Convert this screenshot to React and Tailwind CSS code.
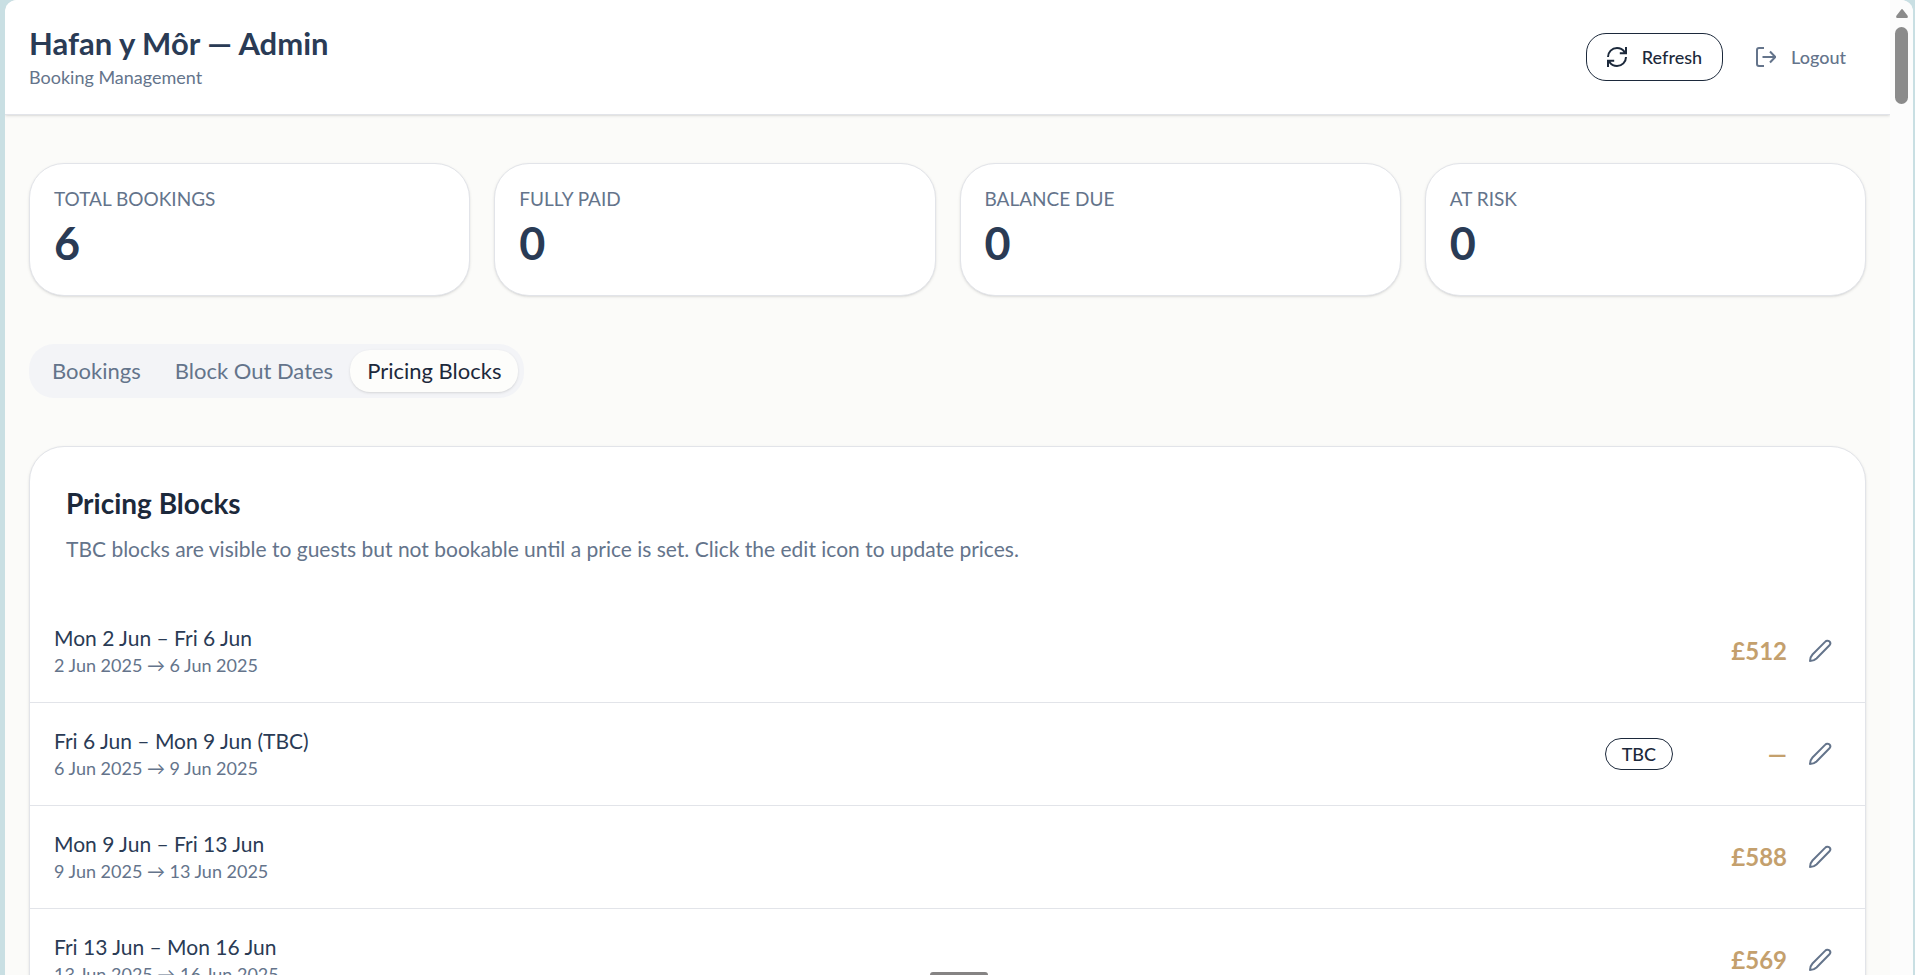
import { useState } from "react";
import clsx from "clsx";

const stats = [
  { label: "TOTAL BOOKINGS", value: 6 },
  { label: "FULLY PAID", value: 0 },
  { label: "BALANCE DUE", value: 0 },
  { label: "AT RISK", value: 0 },
];

const tabs = ["Bookings", "Block Out Dates", "Pricing Blocks"];

const blocks = [
  { id: 1, label: "Mon 2 Jun – Fri 6 Jun", dates: "2 Jun 2025 → 6 Jun 2025", price: "£512" },
  { id: 2, label: "Fri 6 Jun – Mon 9 Jun (TBC)", dates: "6 Jun 2025 → 9 Jun 2025", price: null },
  { id: 3, label: "Mon 9 Jun – Fri 13 Jun", dates: "9 Jun 2025 → 13 Jun 2025", price: "£588" },
  { id: 4, label: "Fri 13 Jun – Mon 16 Jun", dates: "13 Jun 2025 → 16 Jun 2025", price: "£569" },
];

function RefreshIcon() {
  return (
    <svg viewBox="0 0 20 20" className="size-5" fill="none" stroke="currentColor" strokeWidth="2" aria-hidden="true">
      <path d="M1 10a9 9 0 0 1 9-9c3.200 0 5.600 1.300 7.300 3.600L19 6.200M19 0v6.200h-6.200" />
      <path d="M19 10a9 9 0 0 1-9 9c-3.200 0-5.600-1.300-7.300-3.600L1 13.800M1 20v-6.200h6.200" />
    </svg>
  );
}

function LogoutIcon() {
  return (
    <svg viewBox="0 0 20 20" className="size-5" fill="none" stroke="currentColor" strokeWidth="2" aria-hidden="true">
      <path d="M8 1H3a2 2 0 0 0-2 2v14a2 2 0 0 0 2 2h5" />
      <path d="M6.500 10H19M14 4.500l5.300 5.500-5.300 5.500" />
    </svg>
  );
}

function PencilIcon() {
  return (
    <svg viewBox="0 0 24 24" className="size-6" fill="none" stroke="currentColor" strokeWidth="2" strokeLinejoin="round" aria-hidden="true">
      <path d="M17.300 2.600a2.700 2.700 0 0 1 4.200 3.700L8.500 19.500c-1.800 1.700-3.600 2.500-6.500 2.500 0-2.900.8-4.700 2.500-6.500Z" />
    </svg>
  );
}

function BlockRow({ block }) {
  return (
    <li className="flex h-[103px] items-center justify-between border-b border-[#e2e4e9] px-6">
      <div>
        <p className="text-[21px] leading-7 text-[#2a3b55]">{block.label}</p>
        <p className="mt-px text-[18px] leading-[25px] text-[#64748b]">{block.dates}</p>
      </div>
      <div className="flex items-center">
        {!block.price && (
          <span className="flex h-8 items-center rounded-full border border-[#1c293b] px-4 text-[18px] font-medium text-[#1c293b]">
            TBC
          </span>
        )}
        <span className="w-[114px] text-right text-[24px] font-bold text-[#c4a06d]">
          {block.price ?? "—"}
        </span>
        <button type="button" aria-label={`Edit ${block.label}`} className="ml-[21px] mr-[9px] text-[#64748b]">
          <PencilIcon />
        </button>
      </div>
    </li>
  );
}

function Scrollbar() {
  return (
    <div className="flex w-[23px] shrink-0 flex-col items-center bg-[#fcfcfc] pt-[9px]" aria-hidden="true">
      <svg viewBox="0 0 12 9" className="h-[9px] w-3 fill-[#8b8b8b]">
        <path d="M5 .8q1-1.400 2 0l4.600 6q.9 2.200-1 2.200H1.400q-1.900 0-1-2.200Z" />
      </svg>
      <div className="mt-[9px] h-[77px] w-[13px] rounded-full bg-[#8b8b8b]" />
    </div>
  );
}

function App() {
  const [activeTab, setActiveTab] = useState("Pricing Blocks");

  return (
    <div className="h-screen overflow-hidden bg-[#c9dfe3] pl-[5px] pr-[2px] font-['Lato',sans-serif]">
      <div className="relative flex h-full overflow-hidden rounded-t-xl bg-[#fbfbf9]">
        <div className="min-w-0 flex-1">
          <header className="flex h-[115px] items-center justify-between border-b border-[#e2e4e9] bg-white px-6 shadow-sm">
            <div>
              <h1 className="text-[31px] leading-10 font-bold text-[#2a3b55]">Hafan y Môr — Admin</h1>
              <p className="text-[18px] leading-7 text-[#64748b]">Booking Management</p>
            </div>
            <div className="flex items-center gap-[13px]">
              <button type="button" className="flex h-12 items-center gap-[15px] rounded-[20px] border border-[#1c293b] px-5 text-[18px] font-medium text-[#1c293b]">
                <RefreshIcon />
                Refresh
              </button>
              <button type="button" className="flex h-12 items-center gap-[15px] px-5 text-[18px] font-medium text-[#64748b]">
                <LogoutIcon />
                Logout
              </button>
            </div>
          </header>

          <main className="px-6 py-12">
            <section className="grid grid-cols-4 gap-6">
              {stats.map((stat) => (
                <div key={stat.label} className="h-[133px] rounded-[35px] border border-[#e2e4e9] bg-white px-6 pt-[23px] shadow-sm">
                  <p className="text-[19px] leading-6 text-[#64748b]">{stat.label}</p>
                  <p className="mt-1 text-[45px] leading-[56px] font-bold text-[#2a3b55]">{stat.value}</p>
                </div>
              ))}
            </section>

            <div role="tablist" className="mt-12 flex h-[54px] w-fit items-center rounded-[25px] bg-[#f3f4f7] px-1.5">
              {tabs.map((tab) => (
                <button
                  key={tab}
                  type="button"
                  role="tab"
                  aria-selected={activeTab === tab}
                  onClick={() => setActiveTab(tab)}
                  className={clsx(
                    "h-[42px] rounded-[20px] px-[17px] text-[22px] leading-7",
                    activeTab === tab ? "bg-[#fdfdfb] text-[#1c293b] shadow-sm" : "text-[#64748b]"
                  )}
                >
                  {tab}
                </button>
              ))}
            </div>

            <section className="mt-12 rounded-[35px] border border-[#e2e4e9] bg-white shadow-sm">
              <div className="px-9 pt-9">
                <h2 className="text-[28px] leading-10 font-bold text-[#1c293b]">Pricing Blocks</h2>
                <p className="mt-2.5 text-[21px] leading-8 text-[#64748b]">
                  TBC blocks are visible to guests but not bookable until a price is set. Click the edit icon to update prices.
                </p>
              </div>
              <ul className="mt-[35px]">
                {blocks.map((block) => (
                  <BlockRow key={block.id} block={block} />
                ))}
              </ul>
            </section>
          </main>
        </div>
        <Scrollbar />
        <div className="absolute bottom-0 left-[925px] h-[3px] w-[58px] rounded-t-md bg-[#858383]" />
      </div>
    </div>
  );
}

export default App;
